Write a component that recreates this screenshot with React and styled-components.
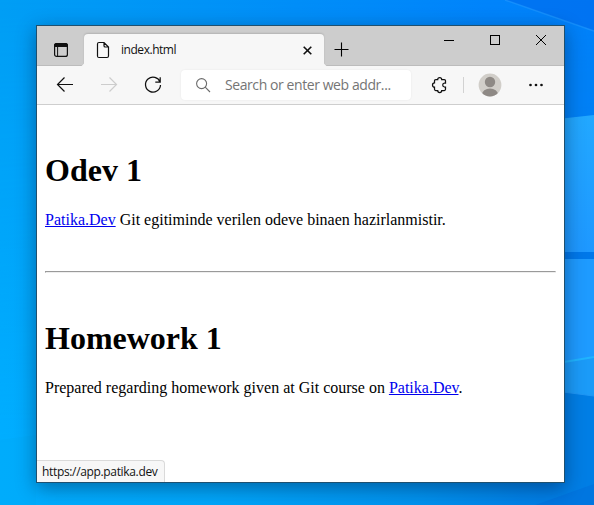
import React from "react";
import styled, { createGlobalStyle } from "styled-components";

const GlobalStyle = createGlobalStyle`
  *, *::before, *::after { box-sizing: border-box; }
  body { margin: 0; overflow: hidden; }
`;

const Desktop = styled.main`
  position: relative;
  width: 594px;
  height: 505px;
  padding: 25px 29px 22px 36px;
  overflow: hidden;
  background: #0294f4;
`;

const WallpaperArt = styled.svg`
  position: absolute;
  inset: 0;
`;

const Window = styled.section`
  position: relative;
  display: flex;
  flex-direction: column;
  width: 529px;
  height: 458px;
  border: 1px solid #1f506f;
  background: #fff;
  box-shadow: 0 5px 18px rgba(0, 20, 50, 0.42);
  font-family: "Open Sans", "Noto Sans", sans-serif;
`;

const TabStrip = styled.header`
  display: flex;
  flex: 0 0 40px;
  background: #cdcdcd;
  box-shadow: inset 0 -1px 0 #bcbcbc;
`;

const IconSlot = styled.span`
  display: flex;
  flex: 0 0 ${(p) => p.$width}px;
  padding: ${(p) => p.$top || 0}px 0 0 ${(p) => p.$left || 0}px;
`;

const Icon = styled.svg`
  display: block;
  flex: none;
  overflow: visible;
  fill: none;
  stroke: ${(p) => p.$color || "#101010"};
  stroke-width: ${(p) => p.$weight || 1.1};
`;

const Tab = styled.div`
  position: relative;
  display: flex;
  width: 240px;
  height: 32px;
  margin-top: 8px;
  border-radius: 4px 4px 0 0;
  background: #f7f7f7;
  box-shadow: 0 -1px 2px rgba(0, 0, 0, 0.13);
  clip-path: inset(-3px -3px 0 -3px);

  &::before,
  &::after {
    content: "";
    position: absolute;
    bottom: 0;
    width: 3px;
    height: 3px;
  }
  &::before {
    left: -3px;
    background: radial-gradient(circle at 0 0, transparent 2.5px, #f7f7f7 3px);
  }
  &::after {
    right: -3px;
    background: radial-gradient(circle at 100% 0, transparent 2.5px, #f7f7f7 3px);
  }
`;

const TabTitle = styled.span`
  width: 182px;
  color: #111;
  font-size: 12px;
  line-height: 32px;
  letter-spacing: -0.46px;
`;

const WindowControls = styled.div`
  display: flex;
  width: 137px;
  margin-left: auto;
`;

const Toolbar = styled.nav`
  display: flex;
  flex: 0 0 39px;
  border-bottom: 1px solid #cecece;
  background: #f7f7f7;
`;

const AddressBar = styled.div`
  display: flex;
  width: 230px;
  height: 30px;
  margin-top: 4px;
  border-radius: 4px;
  background: #fff;
  box-shadow: 0 0 2px rgba(0, 0, 0, 0.08);
`;

const Placeholder = styled.span`
  color: #757575;
  font-size: 14px;
  line-height: 30px;
  letter-spacing: -0.42px;
  white-space: nowrap;
`;

const Page = styled.article`
  flex: 1;
  padding: 47px 8px 0;
  color: #000;
  font-family: "Liberation Serif", "Times New Roman", serif;
`;

const Heading = styled.h1`
  margin: 0 0 23px;
  font-size: 32px;
  line-height: 36px;
`;

const Paragraph = styled.p`
  margin: 0;
  font-size: 16px;
  line-height: 18px;
`;

const Link = styled.a`
  color: #0000ee;
  text-decoration: underline;
`;

const Rule = styled.hr`
  height: 2px;
  margin: 42px 0 47px;
  border: 1px solid;
  border-color: #9a9a9a #eeeeee #eeeeee #9a9a9a;
`;

const StatusBubble = styled.div`
  position: absolute;
  left: 0;
  bottom: 0;
  width: 128px;
  height: 22px;
  padding-left: 5px;
  border-top: 1px solid #dadada;
  border-right: 1px solid #dadada;
  border-radius: 0 4px 0 0;
  background: #f7f7f7;
  color: #111;
  font-size: 12px;
  line-height: 22px;
  letter-spacing: -0.34px;
  white-space: nowrap;
`;

function Wallpaper() {
  return (
    <WallpaperArt width="594" height="505" aria-hidden="true">
      <defs>
        <linearGradient id="sky" x1="0" y1="0" x2="1" y2="0">
          <stop offset="0" stopColor="#009ef5" />
          <stop offset="0.5" stopColor="#008ef8" />
          <stop offset="0.82" stopColor="#0084fb" />
          <stop offset="1" stopColor="#0082fb" />
        </linearGradient>
        <linearGradient id="floor" x1="0" y1="0" x2="1" y2="0">
          <stop offset="0" stopColor="#00aeff" />
          <stop offset="0.35" stopColor="#00a6fa" />
          <stop offset="0.7" stopColor="#0092ee" />
          <stop offset="0.91" stopColor="#007ee5" />
          <stop offset="1" stopColor="#0078e2" />
        </linearGradient>
        <linearGradient id="fade" x1="0" y1="0" x2="0" y2="1">
          <stop offset="0" stopColor="#000" />
          <stop offset="0.9" stopColor="#fff" />
        </linearGradient>
        <mask id="lower"><rect width="594" height="505" fill="url(#fade)" /></mask>
        <linearGradient id="pane" x1="0" y1="0" x2="0" y2="1">
          <stop offset="0" stopColor="#22a8ff" />
          <stop offset="1" stopColor="#1e98ff" />
        </linearGradient>
      </defs>
      <rect width="594" height="505" fill="url(#sky)" />
      <rect width="594" height="505" fill="url(#floor)" mask="url(#lower)" />
      <path d="M505 0L594 31V0Z" fill="#006eee" opacity="0.7" />
      <path d="M505 0L594 31" stroke="#229aff" strokeWidth="1.5" opacity="0.6" />
      <path d="M540 121L594 115V252H540Z" fill="url(#pane)" />
      <path d="M540 259H594V400L540 389Z" fill="#1e9bff" />
      <path d="M540 366L594 357V396L540 390Z" fill="#1b9bf8" />
      <path d="M540 366L594 357" stroke="#20b4ff" strokeWidth="2" />
      <rect x="540" y="252" width="54" height="7" fill="#0078ea" />
      <path d="M540 389L594 396V505H540Z" fill="#007ee5" />
      <path d="M540 389L594 396" stroke="#2097f5" />
      <path d="M535 505L594 484V505Z" fill="#0076e0" />
      <path d="M0 440L36 435V505H0Z" fill="#00aaf9" opacity="0.6" />
    </WallpaperArt>
  );
}

export default function App() {
  return (
    <>
      <GlobalStyle />
      <Desktop>
        <Wallpaper />
        <Window>
          <TabStrip>
            <IconSlot $width={47} $left={17} $top={17}>
              <Icon width="14" height="14" $weight={1.2}>
                <rect x="0.6" y="0.6" width="12.8" height="12.8" rx="2" />
                <path d="M0.6 3.5V2.5Q0.6 0.6 2.5 0.6H11.5Q13.4 0.6 13.4 2.5V3.5Z" fill="#101010" />
                <path d="M3.6 4V13" strokeWidth="1" />
              </Icon>
            </IconSlot>
            <Tab>
              <IconSlot $width={37} $left={13} $top={8}>
                <Icon width="12" height="16" $weight={1.2}>
                  <path d="M2 0.5H7L11.5 5V14Q11.5 15.5 10 15.5H2Q0.5 15.5 0.5 14V2Q0.5 0.5 2 0.5ZM7 0.5V3.7Q7 5 8.3 5H11.5" />
                </Icon>
              </IconSlot>
              <TabTitle>index.html</TabTitle>
              <IconSlot $width={21} $top={12}>
                <Icon width="9" height="9" $weight={1.6}>
                  <path d="M0.7 0.7L8.3 8.3M8.3 0.7L0.7 8.3" />
                </Icon>
              </IconSlot>
            </Tab>
            <IconSlot $width={30} $left={10} $top={16}>
              <Icon width="15" height="15" $color="#000">
                <path d="M0.5 7.5H14.5M7.5 0.5V14.5" />
              </Icon>
            </IconSlot>
            <WindowControls>
              <IconSlot $width={46} $left={17} $top={9}>
                <Icon width="10" height="10" $weight={1} $color="#000"><path d="M0 5.5H10" /></Icon>
              </IconSlot>
              <IconSlot $width={46} $left={17} $top={9}>
                <Icon width="10" height="10" $weight={1} $color="#000"><rect x="0.5" y="0.5" width="9" height="9" /></Icon>
              </IconSlot>
              <IconSlot $width={45} $left={17} $top={9}>
                <Icon width="10" height="10" $weight={1} $color="#000"><path d="M0 0L10 10M10 0L0 10" /></Icon>
              </IconSlot>
            </WindowControls>
          </TabStrip>
          <Toolbar>
            <IconSlot $width={44} $left={20} $top={11}>
              <Icon width="16" height="15" $weight={1.2}><path d="M7.5 0.5L0.5 7.5L7.5 14.5M0.5 7.5H16" /></Icon>
            </IconSlot>
            <IconSlot $width={44} $left={20} $top={11}>
              <Icon width="16" height="15" $color="#cdcdcd" $weight={1.2}><path d="M8.5 0.5L15.5 7.5L8.5 14.5M15.5 7.5H0" /></Icon>
            </IconSlot>
            <IconSlot $width={56} $left={20} $top={11}>
              <Icon width="16" height="16" $weight={1.25}>
                <path d="M15.1 5.2A7.5 7.5 0 1 0 15.5 8M15.2 0.2V5.2H10.3" />
              </Icon>
            </IconSlot>
            <AddressBar>
              <IconSlot $width={44} $left={15} $top={8}>
                <Icon width="14" height="14" $color="#6b6b6b">
                  <circle cx="5.6" cy="5.6" r="5" /><path d="M9.2 9.2L14 14" />
                </Icon>
              </IconSlot>
              <Placeholder>Search or enter web addr...</Placeholder>
            </AddressBar>
            <IconSlot $width={52} $left={21} $top={11}>
              <Icon width="15" height="16" $weight={1.25}>
                <path d="M3.5 2.5H5.7C5.7 1.2 6.5 0.5 7.7 0.5S9.7 1.2 9.7 2.5H12.3Q13.5 2.5 13.5 3.7V6H12.5Q10.7 6.2 10.7 8T12.5 10H13.5V12.3Q13.5 13.5 12.3 13.5H9.7C9.7 14.8 8.9 15.5 7.7 15.5S5.7 14.8 5.7 13.5H3.7Q2.5 13.5 2.5 12.3V10.2C1.2 10.2 0.5 9.3 0.5 8S1.2 5.8 2.5 5.8V3.7Q2.5 2.5 3.7 2.5" />
              </Icon>
            </IconSlot>
            <IconSlot $width={15} $top={11}>
              <Icon width="1" height="16" $color="#d2d2d2" $weight={1}><path d="M0.5 0V16" /></Icon>
            </IconSlot>
            <IconSlot $width={50} $top={7}>
              <Icon width="24" height="24" $color="none">
                <defs><clipPath id="avatar"><circle cx="12" cy="12" r="11.4" /></clipPath></defs>
                <circle cx="12" cy="12" r="11.4" fill="#d1cec9" />
                <g clipPath="url(#avatar)" fill="#8e8985">
                  <circle cx="12" cy="9" r="5.2" />
                  <ellipse cx="12" cy="21.4" rx="8" ry="6" />
                </g>
              </Icon>
            </IconSlot>
            <IconSlot $width={32} $left={1} $top={17}>
              <Icon width="15" height="4" $color="none">
                <g fill="#101010"><circle cx="1.5" cy="2" r="1.35" /><circle cx="7" cy="2" r="1.35" /><circle cx="12.5" cy="2" r="1.35" /></g>
              </Icon>
            </IconSlot>
          </Toolbar>
          <Page>
            <Heading>Odev 1</Heading>
            <Paragraph><Link>Patika.Dev</Link> Git egitiminde verilen odeve binaen hazirlanmistir.</Paragraph>
            <Rule />
            <Heading>Homework 1</Heading>
            <Paragraph>Prepared regarding homework given at Git course on <Link>Patika.Dev</Link>.</Paragraph>
          </Page>
          <StatusBubble>https://app.patika.dev</StatusBubble>
        </Window>
      </Desktop>
    </>
  );
}
